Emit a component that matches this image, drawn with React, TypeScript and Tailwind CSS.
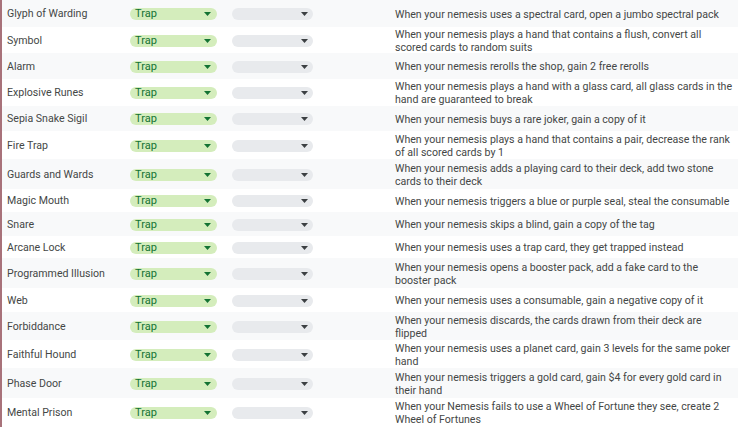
const rows = [
  { name: "Glyph of Warding", h: "h-[27px]", desc: "When your nemesis uses a spectral card, open a jumbo spectral pack" },
  { name: "Symbol", h: "h-[26px]", desc: "When your nemesis plays a hand that contains a flush, convert all scored cards to random suits" },
  { name: "Alarm", h: "h-[26px]", desc: "When your nemesis rerolls the shop, gain 2 free rerolls" },
  { name: "Explosive Runes", h: "h-[27px]", desc: "When your nemesis plays a hand with a glass card, all glass cards in the hand are guaranteed to break" },
  { name: "Sepia Snake Sigil", h: "h-[25px]", desc: "When your nemesis buys a rare joker, gain a copy of it" },
  { name: "Fire Trap", h: "h-[28px]", desc: "When your nemesis plays a hand that contains a pair, decrease the rank of all scored cards by 1" },
  { name: "Guards and Wards", h: "h-[30px]", desc: "When your nemesis adds a playing card to their deck, add two stone cards to their deck" },
  { name: "Magic Mouth", h: "h-[23px]", desc: "When your nemesis triggers a blue or purple seal, steal the consumable" },
  { name: "Snare", h: "h-[24px]", desc: "When your nemesis skips a blind, gain a copy of the tag" },
  { name: "Arcane Lock", h: "h-[22px]", desc: "When your nemesis uses a trap card, they get trapped instead" },
  { name: "Programmed Illusion", h: "h-[30px]", desc: "When your nemesis opens a booster pack, add a fake card to the booster pack" },
  { name: "Web", h: "h-[24px]", desc: "When your nemesis uses a consumable, gain a negative copy of it" },
  { name: "Forbiddance", h: "h-[28px]", desc: "When your nemesis discards, the cards drawn from their deck are flipped" },
  { name: "Faithful Hound", h: "h-[28px]", desc: "When your nemesis uses a planet card, gain 3 levels for the same poker hand" },
  { name: "Phase Door", h: "h-[30px]", desc: "When your nemesis triggers a gold card, gain $4 for every gold card in their hand" },
  { name: "Mental Prison", h: "h-[29px]", desc: "When your Nemesis fails to use a Wheel of Fortune they see, create 2 Wheel of Fortunes" },
]

function Caret({ className }: { className: string }) {
  return (
    <svg width="7" height="4" viewBox="0 0 7 4" className={className}>
      <path d="M0 0h7L3.5 4z" fill="currentColor" />
    </svg>
  )
}

export default function App() {
  return (
    <div
      className="w-[738px] h-[427px] overflow-hidden bg-white border-l-2 border-[#a8727a] text-[10.6px] text-[#444746]"
      style={{ fontFamily: "Roboto, 'Liberation Sans', sans-serif" }}
    >
      {rows.map((row, i) => (
        <div
          key={row.name}
          className={`flex items-center pt-[1px] ${row.h} ${i % 2 === 0 ? "bg-[#f8f9fa]" : "bg-white"}`}
        >
          <div className="w-[128px] shrink-0 pl-[5px] whitespace-nowrap">{row.name}</div>
          <div className="w-[87px] h-[12px] shrink-0 rounded-full bg-[#d4edbc] flex items-center justify-between pl-[5px] pr-[6px] text-[#137333] text-[11px] leading-[12px]">
            <span>Trap</span>
            <Caret className="text-[#137333]" />
          </div>
          <div className="ml-[15px] w-[81px] h-[12px] shrink-0 rounded-full bg-[#e8eaed] flex items-center justify-end pr-[5px]">
            <Caret className="text-[#3c4043]" />
          </div>
          <div className="ml-[82px] flex-1 pr-[4px] leading-[13px]">{row.desc}</div>
        </div>
      ))}
    </div>
  )
}
